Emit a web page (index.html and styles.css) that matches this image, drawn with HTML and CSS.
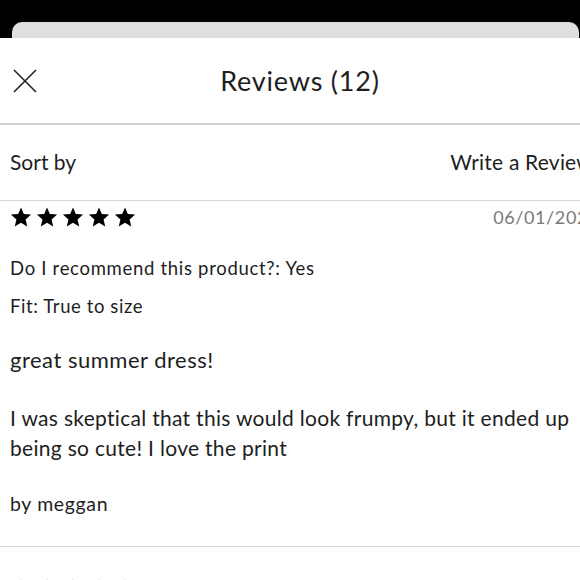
FILE: index.html
```html
<!DOCTYPE html>
<html>
<head>
<meta charset="utf-8">
<link rel="stylesheet" href="styles.css">
</head>
<body>
<div class="screen">
  <div class="back-sheet"></div>
  <div class="modal">
    <header class="modal-head">
      <button class="close" aria-label="Close">
        <svg width="24" height="24" viewBox="0 0 24 24"><path d="M1 1 L23 23 M23 1 L1 23" stroke="#222" stroke-width="1.6" fill="none"/></svg>
      </button>
      <h1 class="title">Reviews (12)</h1>
    </header>
    <div class="toolbar">
      <span class="sort">Sort by</span>
      <span class="write">Write a Review</span>
    </div>
    <article class="review">
      <div class="review-top">
        <div class="stars">
          <svg viewBox="0 0 24 24"><path d="M12 1.5l3.1 7.2 7.9.7-6 5.2 1.8 7.7L12 18.2 5.2 22.3 7 14.6 1 9.4l7.9-.7z"/></svg>
          <svg viewBox="0 0 24 24"><path d="M12 1.5l3.1 7.2 7.9.7-6 5.2 1.8 7.7L12 18.2 5.2 22.3 7 14.6 1 9.4l7.9-.7z"/></svg>
          <svg viewBox="0 0 24 24"><path d="M12 1.5l3.1 7.2 7.9.7-6 5.2 1.8 7.7L12 18.2 5.2 22.3 7 14.6 1 9.4l7.9-.7z"/></svg>
          <svg viewBox="0 0 24 24"><path d="M12 1.5l3.1 7.2 7.9.7-6 5.2 1.8 7.7L12 18.2 5.2 22.3 7 14.6 1 9.4l7.9-.7z"/></svg>
          <svg viewBox="0 0 24 24"><path d="M12 1.5l3.1 7.2 7.9.7-6 5.2 1.8 7.7L12 18.2 5.2 22.3 7 14.6 1 9.4l7.9-.7z"/></svg>
        </div>
        <span class="date">06/01/2020</span>
      </div>
      <p class="meta">Do I recommend this product?: Yes</p>
      <p class="meta fit">Fit: True to size</p>
      <h2 class="review-title">great summer dress!</h2>
      <p class="body">I was skeptical that this would look frumpy, but it ended up being so cute! I love the print</p>
      <p class="author">by meggan</p>
    </article>
    <article class="review">
      <div class="review-top">
        <div class="stars">
          <svg viewBox="0 0 24 24"><path d="M12 1.5l3.1 7.2 7.9.7-6 5.2 1.8 7.7L12 18.2 5.2 22.3 7 14.6 1 9.4l7.9-.7z"/></svg>
          <svg viewBox="0 0 24 24"><path d="M12 1.5l3.1 7.2 7.9.7-6 5.2 1.8 7.7L12 18.2 5.2 22.3 7 14.6 1 9.4l7.9-.7z"/></svg>
          <svg viewBox="0 0 24 24"><path d="M12 1.5l3.1 7.2 7.9.7-6 5.2 1.8 7.7L12 18.2 5.2 22.3 7 14.6 1 9.4l7.9-.7z"/></svg>
          <svg viewBox="0 0 24 24"><path d="M12 1.5l3.1 7.2 7.9.7-6 5.2 1.8 7.7L12 18.2 5.2 22.3 7 14.6 1 9.4l7.9-.7z"/></svg>
          <svg viewBox="0 0 24 24"><path d="M12 1.5l3.1 7.2 7.9.7-6 5.2 1.8 7.7L12 18.2 5.2 22.3 7 14.6 1 9.4l7.9-.7z"/></svg>
        </div>
        <span class="date">05/30/2020</span>
      </div>
    </article>
  </div>
</div>
</body>
</html>
```
FILE: styles.css
```css
html, body {
  margin: 0;
  padding: 0;
  background: #000;
  overflow: hidden;
  width: 580px;
  height: 580px;
}
.screen {
  padding-top: 22px;
  width: 580px;
  height: 558px;
  overflow: hidden;
  font-family: "Lato", "Noto Sans", sans-serif;
  color: #1e1e1e;
}
.back-sheet {
  height: 16px;
  margin: 0 1px 0 12px;
  background: #dfdfdf;
  border-radius: 10px 10px 0 0;
}
.modal {
  width: 600px;
  background: #fff;
  height: 600px;
}
.modal-head {
  position: relative;
  height: 85px;
  display: flex;
  align-items: center;
  justify-content: center;
  border-bottom: 2px solid #cfcfcf;
}
.close {
  position: absolute;
  left: 13px;
  top: 31px;
  padding: 0;
  border: 0;
  background: none;
  width: 24px;
  height: 24px;
}
.close svg { display: block; }
.title {
  margin: 0;
  font-size: 27px;
  font-weight: 400;
  letter-spacing: 0.8px;
}
.toolbar {
  display: flex;
  justify-content: space-between;
  align-items: center;
  height: 75px;
  padding: 0 10px;
  border-bottom: 1px solid #d6d6d6;
  font-size: 21px;
}
.sort { margin-top: -2px; }
.write { margin-top: -2px; margin-right: -3px; letter-spacing: 0.2px; }
.review {
  padding: 0 10px;
  border-bottom: 1px solid #d6d6d6;
}
.review + .review {
  padding-top: 26px;
}
.review-top {
  display: flex;
  justify-content: space-between;
  align-items: center;
  padding-top: 4px;
  height: 24px;
}
.stars {
  display: flex;
  gap: 4px;
}
.stars svg {
  width: 22px;
  height: 22px;
  fill: #000;
}
.date {
  font-size: 18px;
  color: #7a7a7a;
  letter-spacing: 0.6px;
  margin-right: -9px;
}
.meta {
  margin: 28px 0 0;
  font-size: 18.5px;
  line-height: 22px;
  letter-spacing: 0.7px;
}
.meta.fit {
  margin-top: 16px;
  letter-spacing: 0.6px;
}
.review-title {
  margin: 30px 0 0;
  font-size: 22px;
  font-weight: 400;
  line-height: 26px;
  letter-spacing: 0.5px;
}
.body {
  margin: 30px 0 0;
  font-size: 21px;
  line-height: 30px;
  letter-spacing: 0.3px;
}
.author {
  margin: 29px 0 0;
  padding-bottom: 30px;
  font-size: 19.5px;
  line-height: 24px;
  letter-spacing: 0.65px;
}
```
